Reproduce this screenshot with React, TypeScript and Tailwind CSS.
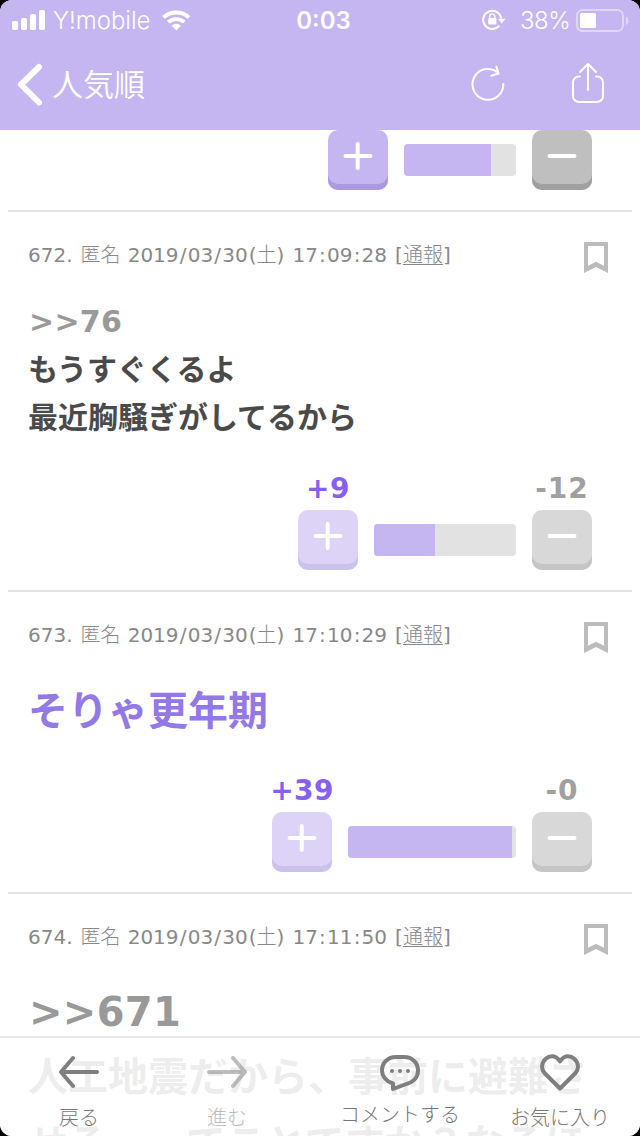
import type { ReactNode } from "react";
import clsx from "clsx";

type Comment = {
  id: number;
  day: string;
  time: string;
  body: ReactNode;
  bodyClass: string;
  plus?: number;
  minus?: number;
  barClass?: string;
  fillClass?: string;
};

const comments: Comment[] = [
  {
    id: 672,
    day: "2019/03/30",
    time: "17:09:28",
    body: (
      <>
        <p className="pl-px tracking-[0.3px] text-[#999999]">&gt;&gt;76</p>
        <p>もうすぐくるよ</p>
        <p>最近胸騒ぎがしてるから</p>
      </>
    ),
    bodyClass: "text-[30px] leading-[48px] text-[#4a4a4a]",
    plus: 9,
    minus: 12,
    barClass: "w-[142px]",
    fillClass: "w-[61px]",
  },
  {
    id: 673,
    day: "2019/03/30",
    time: "17:10:29",
    body: <p>そりゃ更年期</p>,
    bodyClass: "text-[40px] leading-[66px] text-[#9379e8]",
    plus: 39,
    minus: 0,
    barClass: "w-[168px]",
    fillClass: "w-[164px]",
  },
  {
    id: 674,
    day: "2019/03/30",
    time: "17:11:50",
    body: (
      <>
        <p className="pl-px leading-[64px] tracking-[0.3px] text-[#999999]">&gt;&gt;671</p>
        <p>人工地震だから、事前に避難さ</p>
        <p className="pt-px">せる　ってことですか？なるほ</p>
      </>
    ),
    bodyClass: "text-[40px] leading-[66px] whitespace-nowrap text-[#4a4a4a]",
  },
];

function StatusBar() {
  return (
    <div className="grid h-[41px] grid-cols-3 items-center font-['Inter',sans-serif] text-[24px] leading-10">
      <div className="flex items-center pl-3">
        <svg className="-mt-px" width="34" height="20" viewBox="0 0 34 20" fill="currentColor">
          <rect x="0" y="11" width="6" height="9" rx="1.8" />
          <rect x="9" y="8" width="6" height="12" rx="1.8" />
          <rect x="18" y="4" width="6" height="16" rx="1.8" />
          <rect x="27" y="0" width="6" height="20" rx="1.8" />
        </svg>
        <span className="ml-[7px] w-[97px] pt-px font-[350] whitespace-nowrap">Y!mobile</span>
        <svg className="ml-3" width="30" height="22" viewBox="0 0 30 22" fill="none" stroke="currentColor" strokeWidth="3.8">
          <path d="M1.5 7.4a19 19 0 0 1 25.5 0" />
          <path d="M6.2 12.2a12 12 0 0 1 16.1 0" />
          <path d="M14.25 20.5l-4.7-4.8a6.8 6.8 0 0 1 9.4 0z" fill="currentColor" stroke="none" />
        </svg>
      </div>
      <div className="pt-px pl-[7px] text-center font-semibold">0:03</div>
      <div className="flex items-center justify-end pr-[10px]">
        <svg className="-mt-px" width="24" height="22" viewBox="0 0 24 22" fill="none" stroke="currentColor" strokeWidth="2">
          <path d="M19.2 9.2A9.1 9.1 0 1 0 17.3 16.7" />
          <path d="M16 9.8h7.5l-3.8 4.8z" fill="currentColor" stroke="none" />
          <rect x="6.2" y="9" width="8.2" height="6.5" rx="1" fill="currentColor" stroke="none" />
          <path d="M7.8 9.5V7.4a2.5 2.5 0 0 1 5 0v2.1" strokeWidth="1.4" />
        </svg>
        <span className="ml-[14px] w-[50px] pt-px font-[350] tracking-[-0.5px] whitespace-nowrap">38%</span>
        <svg className="ml-1.5" width="54" height="24" viewBox="0 0 54 24">
          <rect x="1" y="1" width="46" height="21" rx="5.5" fill="none" stroke="white" strokeOpacity=".45" strokeWidth="2" />
          <rect x="4" y="4" width="16" height="15" rx="1.5" fill="white" />
          <path d="M50 7.5c3.5 1.5 3.5 7 0 8.5z" fill="white" fillOpacity=".45" />
        </svg>
      </div>
    </div>
  );
}

function NavBar() {
  return (
    <div className="flex h-[87px] items-center justify-between pr-[35px] pl-4">
      <div className="flex items-center">
        <svg width="28" height="46" viewBox="0 0 28 46" fill="none" stroke="currentColor" strokeWidth="6" strokeLinecap="round" strokeLinejoin="round">
          <path d="M23 5L5 22.5L23 40.5" />
        </svg>
        <span className="ml-2 text-[31px] leading-10 font-[350]">人気順</span>
      </div>
      <div className="mb-0.5 flex items-center">
        <svg className="mr-[65px]" width="36" height="44" viewBox="0 0 36 44" fill="none" stroke="currentColor" strokeWidth="2" strokeLinecap="round">
          <path d="M33.3 22a15.4 15.4 0 1 1-5.8-11.7" />
          <path d="M26.3 4.5L28.5 11.5L21.3 13.7" />
        </svg>
        <svg width="34" height="44" viewBox="0 0 34 44" fill="none" stroke="currentColor" strokeWidth="2" strokeLinecap="round" strokeLinejoin="round">
          <path d="M9 14.500H8a6 6 0 0 0-6 6V34a6 6 0 0 0 6 6h18a6 6 0 0 0 6-6V20.500a6 6 0 0 0-6-6h-1" />
          <path d="M17 28V2M9 10L17 2L25 10" />
        </svg>
      </div>
    </div>
  );
}

function VoteButton({ sign, active }: { sign: "plus" | "minus"; active?: boolean }) {
  return (
    <button
      className={clsx(
        "flex size-[60px] justify-center rounded-[10px] pt-3",
        sign === "plus" && active && "bg-[#c5b6f1] shadow-[inset_0_-6px_0_#aa99df]",
        sign === "plus" && !active && "bg-[#dcd3f7] shadow-[inset_0_-6px_0_#ccc1ea]",
        sign === "minus" && active && "bg-[#bfbfbf] shadow-[inset_0_-6px_0_#a0a0a0]",
        sign === "minus" && !active && "bg-[#d8d8d8] shadow-[inset_0_-6px_0_#c5c5c5]",
      )}
    >
      <svg width="30" height="28" viewBox="0 0 30 28" stroke="white" strokeWidth="4" strokeLinecap="round">
        <path d={sign === "plus" ? "M2.5 14h25M14.7 2v24" : "M2.5 14h25"} />
      </svg>
    </button>
  );
}

function VoteBar({ barClass, fillClass }: { barClass?: string; fillClass?: string }) {
  return (
    <div className={clsx("mx-4 mb-3.5 h-8 overflow-hidden rounded-[4px] bg-[#e2e2e2]", barClass)}>
      <div className={clsx("h-full bg-[#c5b6f1]", fillClass)} />
    </div>
  );
}

function Bookmark() {
  return (
    <svg width="24" height="31" viewBox="0 0 24 31" fill="#bcbcbc" fillRule="evenodd">
      <path d="M0 0h24v31l-12-6-12 6zM4 4v19.7l8-4 8 4V4z" />
    </svg>
  );
}

// loosens the separators, the digits keep their own width
function Stamp({ value }: { value: string }) {
  return value.split(/([/:])/).map((part, i) => (
    <span key={i} className={clsx(i % 2 === 1 && "px-[1.2px]")}>
      {part}
    </span>
  ));
}

function CommentItem({ comment }: { comment: Comment }) {
  return (
    <li className="mx-2 border-b-2 border-[#e2e2e2] px-5">
      <div className="flex h-[86px] items-start justify-between pt-[30px] pr-1">
        <p className="text-[20px] leading-[26px] whitespace-nowrap text-[#888888] [word-spacing:0.7px]">
          {comment.id}
          <span className="pr-px">.</span> <span className="font-light">匿名</span> <Stamp value={comment.day} />
          <span className="pl-px">(</span>
          <span className="font-light">土</span>
          <span className="pr-px">)</span> <Stamp value={comment.time} />{" "}
          <span className="pl-px">[</span>
          <a className="font-light underline decoration-1 underline-offset-[2px]">通報</a>]
        </p>
        <Bookmark />
      </div>
      <div className={clsx("font-bold", comment.bodyClass)}>{comment.body}</div>
      {comment.plus !== undefined && (
        <div className="flex items-end justify-end pt-[27px] pr-5 pb-5 text-[28px] leading-10 font-bold">
          <div className="flex w-[60px] flex-col items-center">
            <span className="pb-px tracking-[0.4px] text-[#8560f2]">+{comment.plus}</span>
            <VoteButton sign="plus" />
          </div>
          <VoteBar barClass={comment.barClass} fillClass={comment.fillClass} />
          <div className="flex w-[60px] flex-col items-center">
            <span className="pb-px tracking-[1px] text-[#a0a0a0]">-{comment.minus}</span>
            <VoteButton sign="minus" />
          </div>
        </div>
      )}
    </li>
  );
}

function Toolbar() {
  return (
    <nav className="absolute inset-x-0 bottom-0 flex h-[100px] border-t-2 border-[#e9e9e9] bg-white/90 text-[20px] leading-6 font-light text-[#777777]">
      <div className="flex w-[158px] flex-col items-center pt-4">
        <svg width="40" height="36" viewBox="0 0 40 36" fill="none" stroke="#7f7f7f" strokeWidth="4" strokeLinecap="round" strokeLinejoin="round">
          <path d="M38 18H2M14 4L2 18L14 32" />
        </svg>
        <span className="mt-4">戻る</span>
      </div>
      <div className="flex w-[138px] flex-col items-center pt-4 opacity-50">
        <svg width="40" height="36" viewBox="0 0 40 36" fill="none" stroke="#7f7f7f" strokeWidth="4" strokeLinecap="round" strokeLinejoin="round">
          <path d="M2 18h36M26 4L38 18L26 32" />
        </svg>
        <span className="mt-4">進む</span>
      </div>
      <div className="flex w-[208px] flex-col items-center pt-4">
        <svg width="40" height="38" viewBox="0 0 40 38" fill="none" stroke="#7f7f7f" strokeWidth="4" strokeLinejoin="round">
          <path d="M16 3h8c8 0 14 5.500 14 13.500S32 29 25 30.500L13 35V29.500C6 27 2 22.500 2 16.500C2 8.500 8 3 16 3z" />
          <g fill="#7f7f7f" stroke="none">
            <circle cx="12" cy="17" r="2.1" />
            <circle cx="20" cy="17" r="2.1" />
            <circle cx="28" cy="17" r="2.1" />
          </g>
        </svg>
        <span className="mt-[11px]">コメントする</span>
      </div>
      <div className="flex w-[112px] flex-col items-center pt-4">
        <svg width="40" height="38" viewBox="0 0 40 38" fill="none" stroke="#7f7f7f" strokeWidth="4" strokeLinejoin="round">
          <path d="M20 7.500C16 1 10 1 6 4.500C1 9 1 15 4.500 19L20 34.500L35.500 19C39 15 39 9 34 4.500C30 1 24 1 20 7.500z" />
        </svg>
        <span className="mt-3.5 whitespace-nowrap">お気に入り</span>
      </div>
    </nav>
  );
}

export default function App() {
  return (
    <div className="bg-black">
      <div className="relative flex h-[1136px] w-[640px] flex-col overflow-hidden rounded-[12px] bg-white font-['DejaVu_Sans','Noto_Sans_CJK_JP',sans-serif]">
        <header className="h-[130px] shrink-0 bg-[#c5b6f1] text-white">
          <StatusBar />
          <NavBar />
        </header>
        <ul className="min-h-0 flex-1 overflow-hidden">
          <li className="mx-2 flex items-end justify-end border-b-2 border-[#e2e2e2] pr-10 pb-5">
            <VoteButton sign="plus" active />
            <VoteBar barClass="w-[112px]" fillClass="w-[87px]" />
            <VoteButton sign="minus" active />
          </li>
          {comments.map((comment) => (
            <CommentItem key={comment.id} comment={comment} />
          ))}
        </ul>
        <Toolbar />
      </div>
    </div>
  );
}
